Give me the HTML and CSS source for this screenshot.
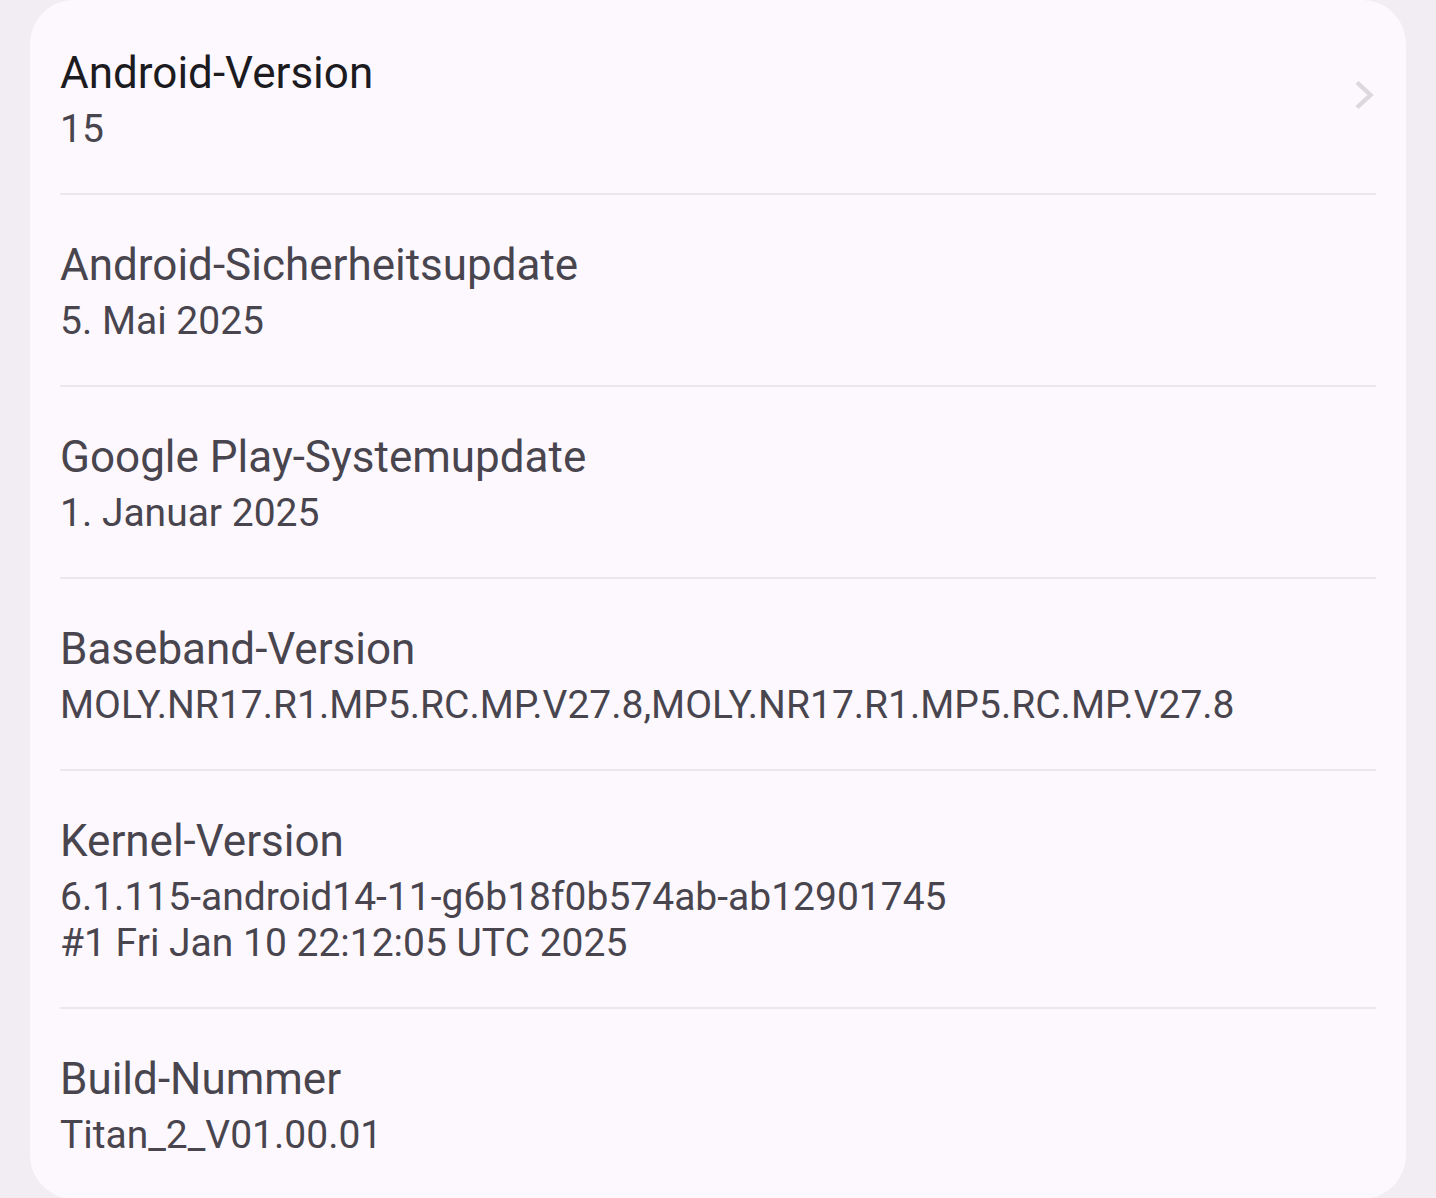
FILE: index.html
```html
<!DOCTYPE html>
<html lang="de">
<head>
<meta charset="utf-8">
<title>Android-Version</title>
<link rel="stylesheet" href="styles.css">
</head>
<body>
<div class="card">
  <div class="row">
    <div class="text">
      <div class="title title-primary">Android-Version</div>
      <div class="summary">15</div>
    </div>
    <svg class="chevron" width="24" height="30" viewBox="0 0 24 30"><path d="M3 2.5 L16.5 15 L3 27.5" fill="none" stroke="#dcd8dc" stroke-width="4.4"/></svg>
  </div>
  <div class="divider"></div>
  <div class="row">
    <div class="text">
      <div class="title">Android-Sicherheitsupdate</div>
      <div class="summary">5. Mai 2025</div>
    </div>
  </div>
  <div class="divider"></div>
  <div class="row">
    <div class="text">
      <div class="title">Google Play-Systemupdate</div>
      <div class="summary">1. Januar 2025</div>
    </div>
  </div>
  <div class="divider"></div>
  <div class="row">
    <div class="text">
      <div class="title">Baseband-Version</div>
      <div class="summary">MOLY.NR17.R1.MP5.RC.MP.V27.8,MOLY.NR17.R1.MP5.RC.MP.V27.8</div>
    </div>
  </div>
  <div class="divider"></div>
  <div class="row">
    <div class="text">
      <div class="title">Kernel-Version</div>
      <div class="summary">6.1.115-android14-11-g6b18f0b574ab-ab12901745<br>#1 Fri Jan 10 22:12:05 UTC 2025</div>
    </div>
  </div>
  <div class="divider"></div>
  <div class="row">
    <div class="text">
      <div class="title">Build-Nummer</div>
      <div class="summary">Titan_2_V01.00.01</div>
    </div>
  </div>
</div>
</body>
</html>
```
FILE: styles.css
```css
html, body {
  margin: 0;
  padding: 0;
  background: #f1edf2;
}
body {
  font-family: Roboto, "Liberation Sans", sans-serif;
  height: 1198px;
  overflow: hidden;
}
.card {
  margin: 0 30px;
  background: #fcf8fd;
  border-radius: 44px;
  padding: 3px 30px 0;
  min-height: 1195px;
}
.row {
  display: flex;
  align-items: center;
  padding: 44px 0 41px 0;
}
.text {
  flex: 1;
}
.title {
  font-size: 44px;
  line-height: 52px;
  margin-bottom: 7px;
  color: #49454e;
}
.title-primary {
  color: #1c1b1f;
}
.summary {
  font-size: 39px;
  line-height: 46px;
  color: #49454e;
}
.chevron {
  display: block;
  margin-right: -2px;
  margin-bottom: 10px;
}
.divider {
  height: 2px;
  background: #ebe7ec;
}
```
